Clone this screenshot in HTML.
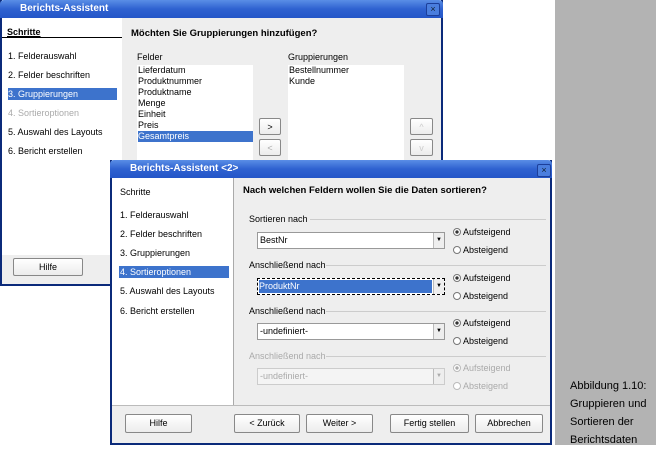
<!DOCTYPE html>
<html><head><meta charset="utf-8"><style>
*{margin:0;padding:0;box-sizing:border-box}
body{width:656px;height:445px;background:#fff;position:relative;overflow:hidden;font-family:"Liberation Sans",sans-serif;font-size:9px;color:#000}
.a{position:absolute}
.gray{background:#b3b3b3}
.win{border:2px solid #0b2a7a;border-top:none;background:#eee}
.title{background:linear-gradient(#5a8ee6,#2f62d0 50%,#2456c8);color:#fff;font-size:10px;font-weight:bold;padding-left:20px;line-height:17px}
.x{width:14px;height:13px;border:1px solid #1c3f9a;border-radius:2px;background:#4a7ede;color:#123;font-size:9px;text-align:center;line-height:11px}
.sel{background:#3d73cc;color:#fff}
.btn{background:linear-gradient(#fff,#ececec);border:1px solid #888;border-radius:2px;text-align:center;font-size:9px;line-height:17px}
.list{background:#fff;font-size:9px;line-height:11px;padding-left:1px}
.combo{background:#fff;border:1px solid #999;font-size:9px;line-height:15px;padding-left:2px}
.combo .ar{position:absolute;right:0;top:0;width:11px;height:100%;border-left:1px solid #bbb;background:#eee;font-size:6px;text-align:center}
.rad{font-size:9px;line-height:11px}
.rad i{display:inline-block;width:8px;height:8px;border:1px solid #777;border-radius:50%;margin-right:2px;vertical-align:-1px;background:#fff}
.rad i.on{background:radial-gradient(#333 35%,#fff 45%)}
.dis{color:#aaa}
.grp{font-size:9px}
.ln{height:1px;background:#ccc}
</style></head><body>
<div class="a gray" style="left:555px;top:0;width:101px;height:445px"></div>

<!-- back window -->
<div class="a win" style="left:0;top:0;width:443px;height:286px"></div>
<div class="a title" style="left:0;top:0;width:443px;height:18px;border-radius:4px 4px 0 0">Berichts-Assistent</div>
<div class="a x" style="left:426px;top:3px">×</div>
<div class="a" style="left:2px;top:18px;width:120px;height:237px;background:#fff"></div>
<div class="a" style="left:7px;top:27px;font-size:9px;font-weight:bold;text-decoration:underline">Schritte</div>
<div class="a" style="left:2px;top:37px;width:120px;height:1px;background:#000"></div>
<div class="a" style="left:8px;top:51px">1. Felderauswahl</div>
<div class="a" style="left:8px;top:70px">2. Felder beschriften</div>
<div class="a sel" style="left:8px;top:88px;width:109px;height:12px;padding-top:1px">3. Gruppierungen</div>
<div class="a dis" style="left:8px;top:108px">4. Sortieroptionen</div>
<div class="a" style="left:8px;top:127px">5. Auswahl des Layouts</div>
<div class="a" style="left:8px;top:146px">6. Bericht erstellen</div>
<div class="a" style="left:131px;top:28px;font-weight:bold;font-size:9.5px">Möchten Sie Gruppierungen hinzufügen?</div>
<div class="a" style="left:137px;top:52px">Felder</div>
<div class="a" style="left:288px;top:52px">Gruppierungen</div>
<div class="a list" style="left:137px;top:65px;width:116px;height:100px">Lieferdatum<br>Produktnummer<br>Produktname<br>Menge<br>Einheit<br>Preis<br><span class="sel" style="display:block">Gesamtpreis</span></div>
<div class="a list" style="left:288px;top:65px;width:116px;height:100px">Bestellnummer<br>Kunde</div>
<div class="a btn" style="left:259px;top:118px;width:22px;height:17px">&gt;</div>
<div class="a btn" style="left:259px;top:139px;width:22px;height:17px;color:#aaa">&lt;</div>
<div class="a btn" style="left:410px;top:118px;width:23px;height:17px;color:#ccc">^</div>
<div class="a btn" style="left:410px;top:139px;width:23px;height:17px;color:#ccc">v</div>
<div class="a btn" style="left:13px;top:258px;width:70px;height:18px">Hilfe</div>

<!-- front window -->
<div class="a win" style="left:110px;top:160px;width:442px;height:285px"></div>
<div class="a title" style="left:110px;top:160px;width:442px;height:18px;border-radius:4px 4px 0 0">Berichts-Assistent &lt;2&gt;</div>
<div class="a x" style="left:537px;top:164px">×</div>
<div class="a" style="left:112px;top:178px;width:121px;height:227px;background:#fff"></div>
<div class="a" style="left:233px;top:178px;width:1px;height:227px;background:#aaa"></div>
<div class="a" style="left:112px;top:405px;width:438px;height:1px;background:#bbb"></div>
<div class="a" style="left:120px;top:187px;font-size:9px">Schritte</div>
<div class="a" style="left:120px;top:210px">1. Felderauswahl</div>
<div class="a" style="left:120px;top:229px">2. Felder beschriften</div>
<div class="a" style="left:120px;top:248px">3. Gruppierungen</div>
<div class="a sel" style="left:119px;top:266px;width:110px;height:12px;padding:1px 0 0 1px">4. Sortieroptionen</div>
<div class="a" style="left:120px;top:286px">5. Auswahl des Layouts</div>
<div class="a" style="left:120px;top:306px">6. Bericht erstellen</div>
<div class="a" style="left:243px;top:185px;font-weight:bold;font-size:9.5px">Nach welchen Feldern wollen Sie die Daten sortieren?</div>

<div class="a" style="left:249px;top:214px">Sortieren nach</div>
<div class="a ln" style="left:310px;top:219px;width:236px"></div>
<div class="a combo" style="left:257px;top:232px;width:188px;height:17px">BestNr<span class="ar">▼</span></div>
<div class="a rad" style="left:453px;top:227px"><i class="on"></i>Aufsteigend</div>
<div class="a rad" style="left:453px;top:245px"><i></i>Absteigend</div>

<div class="a" style="left:249px;top:260px">Anschließend nach</div>
<div class="a ln" style="left:326px;top:265px;width:220px"></div>
<div class="a combo" style="left:257px;top:278px;width:188px;height:17px;border:1px dashed #000"><span class="sel" style="position:absolute;left:1px;top:1px;right:12px;bottom:1px;line-height:13px">ProduktNr</span><span class="ar">▼</span></div>
<div class="a rad" style="left:453px;top:273px"><i class="on"></i>Aufsteigend</div>
<div class="a rad" style="left:453px;top:291px"><i></i>Absteigend</div>

<div class="a" style="left:249px;top:306px">Anschließend nach</div>
<div class="a ln" style="left:326px;top:311px;width:220px"></div>
<div class="a combo" style="left:257px;top:323px;width:188px;height:17px">-undefiniert-<span class="ar">▼</span></div>
<div class="a rad" style="left:453px;top:318px"><i class="on"></i>Aufsteigend</div>
<div class="a rad" style="left:453px;top:336px"><i></i>Absteigend</div>

<div class="a dis" style="left:249px;top:351px">Anschließend nach</div>
<div class="a ln" style="left:326px;top:356px;width:220px"></div>
<div class="a combo dis" style="left:257px;top:368px;width:188px;height:17px;border-color:#ccc;background:#f4f4f4">-undefiniert-<span class="ar">▼</span></div>
<div class="a rad dis" style="left:453px;top:363px"><i class="on" style="border-color:#bbb;background:radial-gradient(#aaa 35%,#fff 45%)"></i>Aufsteigend</div>
<div class="a rad dis" style="left:453px;top:381px"><i style="border-color:#bbb"></i>Absteigend</div>

<div class="a btn" style="left:125px;top:414px;width:67px;height:19px">Hilfe</div>
<div class="a btn" style="left:234px;top:414px;width:66px;height:19px">&lt; Zurück</div>
<div class="a btn" style="left:306px;top:414px;width:67px;height:19px">Weiter &gt;</div>
<div class="a btn" style="left:390px;top:414px;width:79px;height:19px">Fertig stellen</div>
<div class="a btn" style="left:475px;top:414px;width:68px;height:19px">Abbrechen</div>

<div class="a" style="left:570px;top:377px;font-size:11px;line-height:18px;width:100px">Abbildung 1.10:<br>Gruppieren und<br>Sortieren der<br>Berichtsdaten</div>
</body></html>
